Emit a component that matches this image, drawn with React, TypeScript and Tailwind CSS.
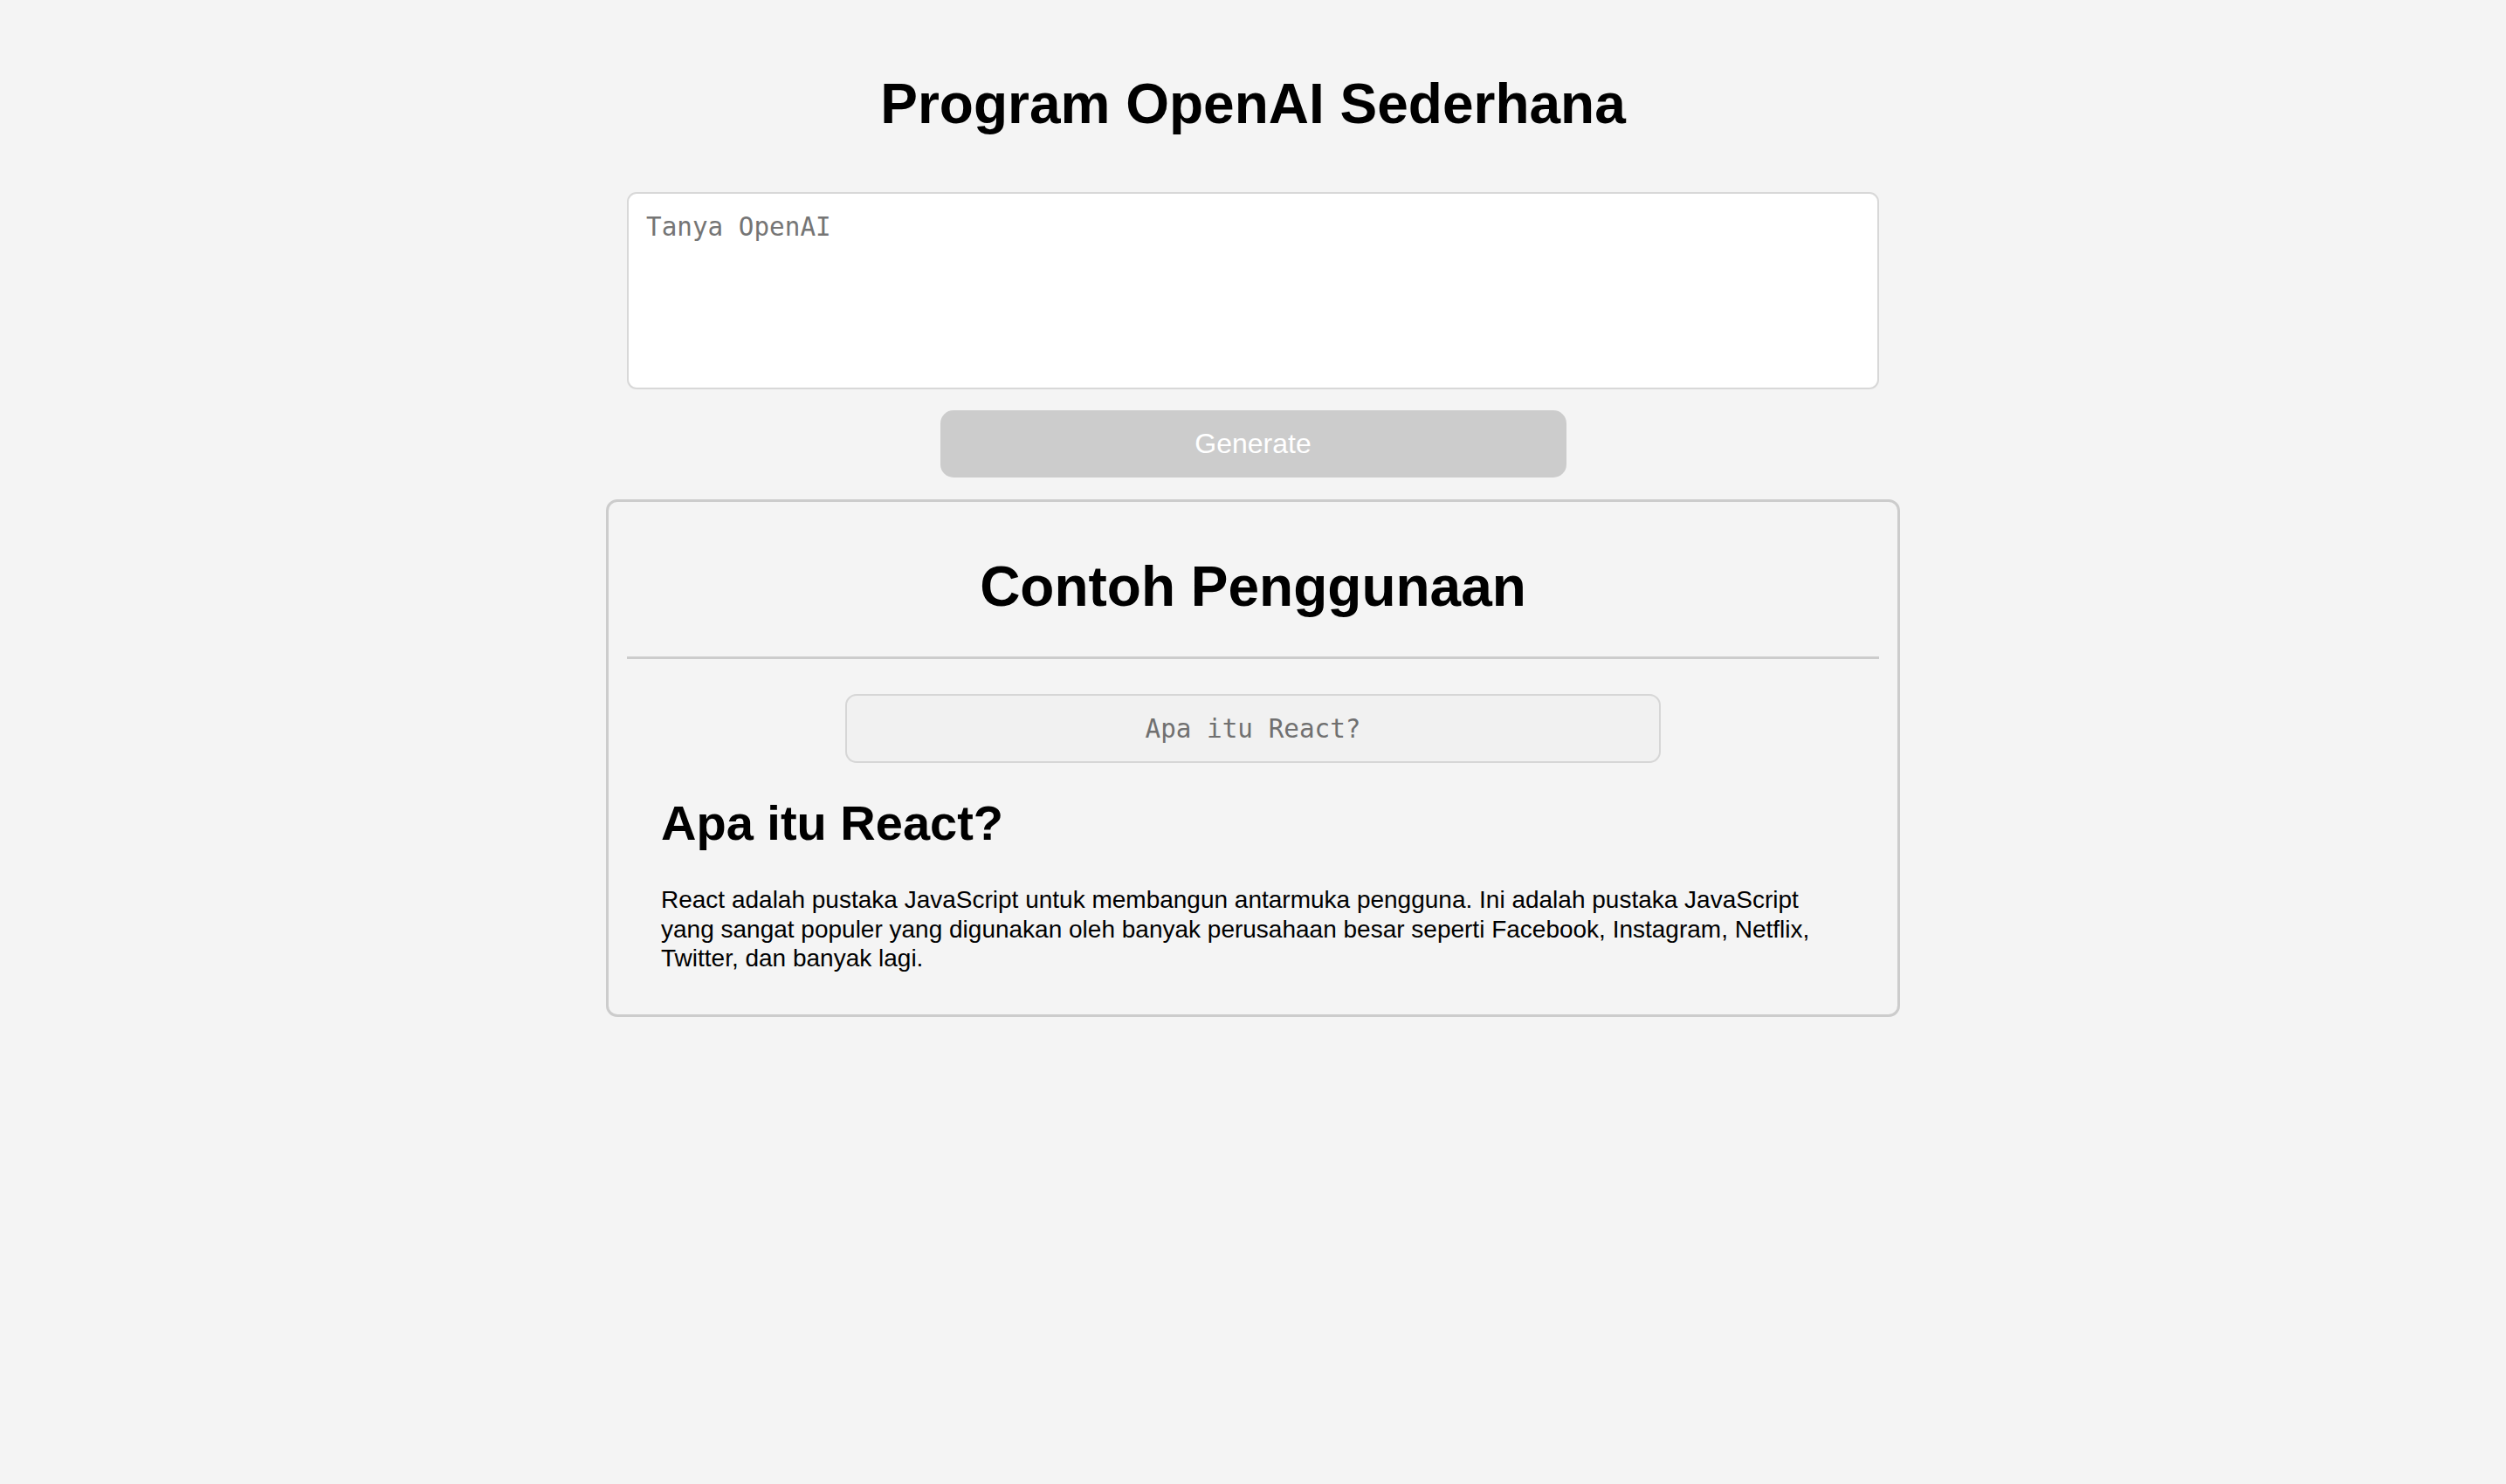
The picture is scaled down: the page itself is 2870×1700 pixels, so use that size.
import { useState } from "react";

const examples = [
  {
    question: "Apa itu React?",
    answer:
      "React adalah pustaka JavaScript untuk membangun antarmuka pengguna. Ini adalah pustaka JavaScript yang sangat populer yang digunakan oleh banyak perusahaan besar seperti Facebook, Instagram, Netflix, Twitter, dan banyak lagi.",
  },
];

export default function App() {
  const [prompt, setPrompt] = useState("");
  const example = examples[0];

  return (
    <div className="min-h-screen bg-[#f4f4f4] font-['Liberation_Sans',Arial,sans-serif] text-black">
      <div className="mx-auto flex w-[1482px] flex-col items-center pt-[82px]">
        <h1 className="text-[64px] font-bold leading-[74px]">Program OpenAI Sederhana</h1>
        <textarea
          className="mt-[64px] h-[226px] w-[1434px] resize-none rounded-[11px] border-2 border-[#d8d8d8] bg-white px-[20px] pt-[21px] pb-[20px] font-['DejaVu_Sans_Mono',monospace] text-[29.3px] leading-[34px] outline-none placeholder:text-[#757575]"
          placeholder="Tanya OpenAI"
          value={prompt}
          onChange={(e) => setPrompt(e.target.value)}
        />
        <button
          className="mt-[24px] h-[77px] w-[717px] rounded-[15px] bg-[#cccccc] pb-[2px] text-[32px] text-white"
          disabled={!prompt}
        >
          Generate
        </button>

        <div className="mt-[25px] w-full rounded-[13px] border-[3px] border-[#cccccc] px-[21px] pt-[60px] pb-[47px]">
          <h2 className="text-center text-[64px] font-bold leading-[74px]">Contoh Penggunaan</h2>
          <div className="mt-[43px] h-[3px] w-full bg-[#cccccc]" />
          <div className="flex justify-center">
            <button className="mt-[40px] h-[79px] w-[934px] rounded-[13px] border-2 border-[#d6d6d6] bg-[#f1f1f1] pt-[2px] font-['DejaVu_Sans_Mono',monospace] text-[29.3px] text-[#707070]">
              {example.question}
            </button>
          </div>
          <div className="px-[39px]">
            <h3 className="mt-[37px] text-[56px] font-bold leading-[64px]">{example.question}</h3>
            <p className="mt-[39px] text-[28px] leading-[33.6px]">{example.answer}</p>
          </div>
        </div>
      </div>
    </div>
  );
}
